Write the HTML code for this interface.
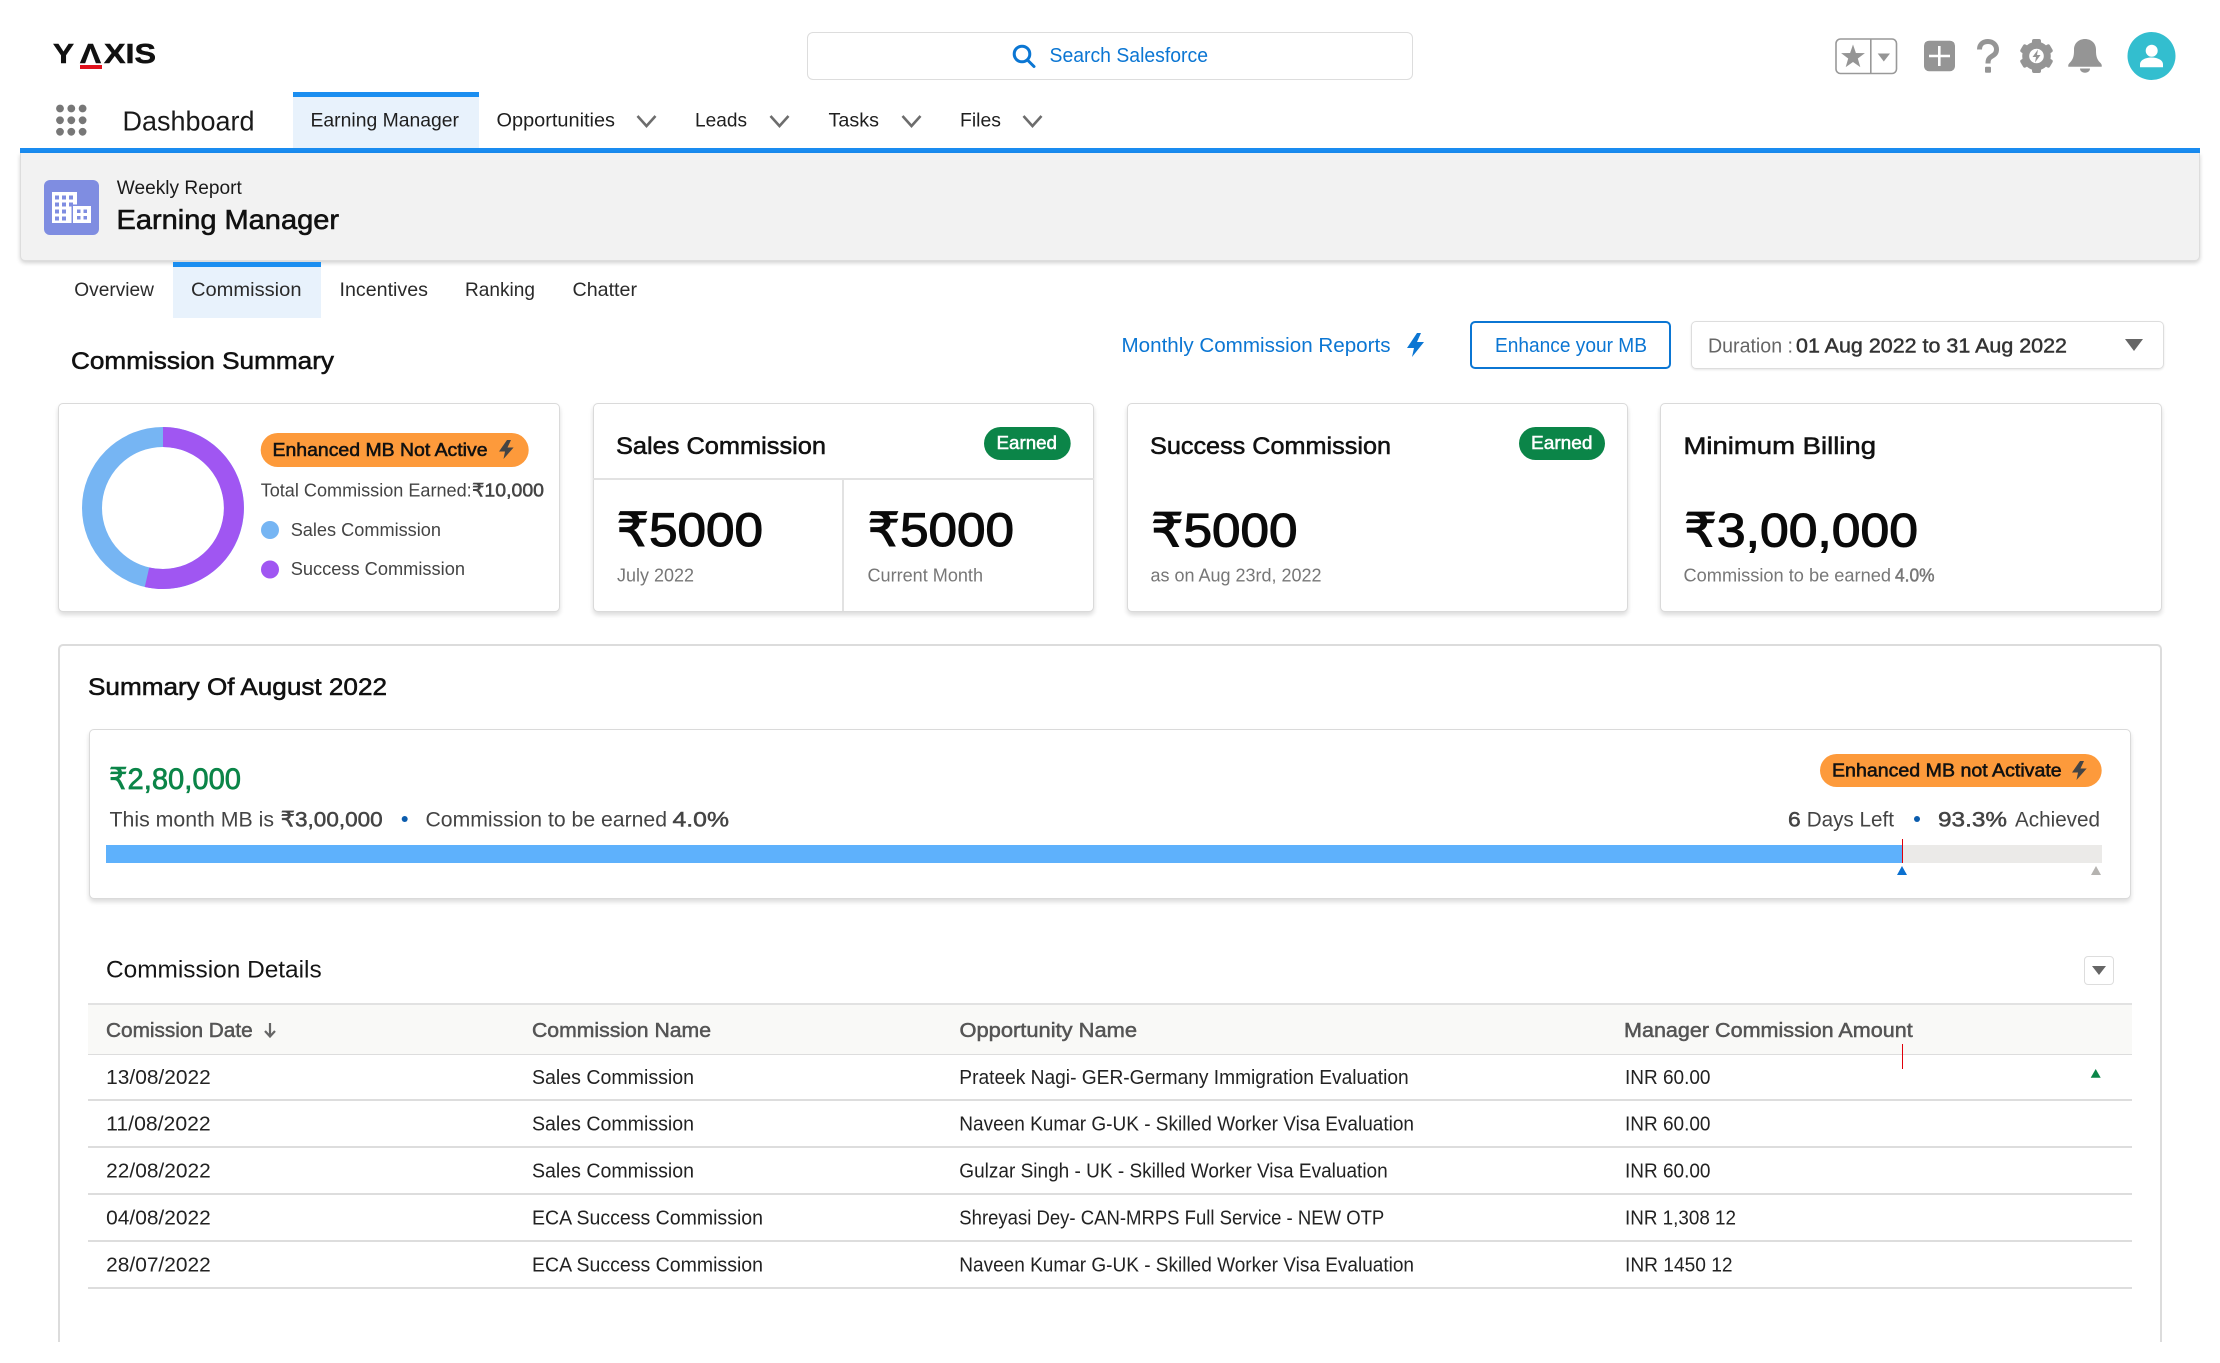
<!DOCTYPE html>
<html lang="en">
<head>
<meta charset="utf-8">
<title>Earning Manager</title>
<style>
html,body{margin:0;padding:0;background:#fff}
body{width:2220px;height:1363px;position:relative;overflow:hidden;font-family:"Liberation Sans","DejaVu Sans",sans-serif}
.b{position:absolute;box-sizing:border-box}
.card{background:#fff;border:1.5px solid #dadada;border-radius:5px;box-shadow:0 3px 5px rgba(0,0,0,.14)}
svg{position:absolute;left:0;top:0}
text{font-family:"Liberation Sans","DejaVu Sans",sans-serif;white-space:pre}
</style>
</head>
<body>
<!-- nav -->
<div class="b" style="left:293px;top:92px;width:186px;height:57px;background:#e8f2fc;border-top:5px solid #1b8ef0"></div>
<div class="b" style="left:20px;top:148px;width:2180px;height:5px;background:#1a8cf0"></div>
<div class="b" style="left:807px;top:32px;width:606px;height:48px;border:1.5px solid #ddd;border-radius:6px"></div>
<!-- page header -->
<div class="b" style="left:20px;top:153px;width:2180px;height:108px;background:#f2f2f2;border:1.5px solid #ddd;border-top:0;border-radius:0 0 5px 5px;box-shadow:0 2px 4px rgba(0,0,0,.18)"></div>
<div class="b" style="left:44px;top:180px;width:55px;height:55px;background:#7f8de1;border-radius:6px"></div>
<div class="b" style="left:173px;top:262px;width:148px;height:56px;background:#e8f2fc;border-top:5px solid #1b8ef0"></div>
<!-- controls -->
<div class="b" style="left:1470px;top:321px;width:201px;height:48px;border:2px solid #0b76d3;border-radius:5px"></div>
<div class="b" style="left:1691px;top:321px;width:473px;height:48px;border:1.5px solid #ddd;border-radius:5px;box-shadow:0 1px 2px rgba(0,0,0,.1)"></div>
<!-- cards -->
<div class="b card" style="left:58px;top:403px;width:502px;height:209px"></div>
<div class="b card" style="left:593px;top:403px;width:501px;height:209px"></div>
<div class="b" style="left:593px;top:478px;width:501px;height:2px;background:#e2e2e2"></div>
<div class="b" style="left:842px;top:479px;width:2px;height:132px;background:#e2e2e2"></div>
<div class="b card" style="left:1127px;top:403px;width:501px;height:209px"></div>
<div class="b card" style="left:1660px;top:403px;width:502px;height:209px"></div>
<!-- summary panel -->
<div class="b" style="left:58px;top:644px;width:2104px;height:698px;background:#fff;border:2px solid #dcdcdc;border-bottom:0;border-radius:5px 5px 0 0"></div>
<div class="b card" style="left:89px;top:729px;width:2042px;height:170px"></div>
<div class="b" style="left:106px;top:845px;width:1996px;height:18px;background:#ebeae8"></div>
<div class="b" style="left:106px;top:845px;width:1796px;height:18px;background:#5eb1fc"></div>
<div class="b" style="left:1901.5px;top:839px;width:1.6px;height:24px;background:#e0000a"></div>
<!-- table -->
<div class="b" style="left:2084px;top:956px;width:30px;height:29px;border:1.5px solid #ddd;border-radius:4px"></div>
<div class="b" style="left:88px;top:1003px;width:2044px;height:52px;background:#f9f9f7;border-top:2px solid #e2e2e2;border-bottom:1.5px solid #ddd"></div>
<div class="b" style="left:88px;top:1099px;width:2044px;height:1.5px;background:#ddd"></div>
<div class="b" style="left:88px;top:1146px;width:2044px;height:1.5px;background:#ddd"></div>
<div class="b" style="left:88px;top:1193px;width:2044px;height:1.5px;background:#ddd"></div>
<div class="b" style="left:88px;top:1240px;width:2044px;height:1.5px;background:#ddd"></div>
<div class="b" style="left:88px;top:1287px;width:2044px;height:1.5px;background:#ddd"></div>
<div class="b" style="left:1901.5px;top:1044px;width:1.6px;height:25px;background:#e0000a"></div>

<svg width="2220" height="1363" viewBox="0 0 2220 1363" xmlns="http://www.w3.org/2000/svg">
<!-- logo -->
<g fill="#111" stroke="#111" stroke-width=".5" font-weight="700" font-size="28">
<text x="53" y="63" textLength="21" lengthAdjust="spacingAndGlyphs">Y</text>
<text x="80" y="63" textLength="21" lengthAdjust="spacingAndGlyphs">Λ</text>
<text x="104" y="63" textLength="52" lengthAdjust="spacingAndGlyphs">XIS</text>
</g>
<rect x="80" y="65" width="22" height="4" fill="#e0101c"/>
<!-- app launcher -->
<g fill="#777">
<circle cx="60" cy="108.5" r="3.9"/><circle cx="71.3" cy="108.5" r="3.9"/><circle cx="82.6" cy="108.5" r="3.9"/>
<circle cx="60" cy="120.3" r="3.9"/><circle cx="71.3" cy="120.3" r="3.9"/><circle cx="82.6" cy="120.3" r="3.9"/>
<circle cx="60" cy="131.8" r="3.9"/><circle cx="71.3" cy="131.8" r="3.9"/><circle cx="82.6" cy="131.8" r="3.9"/>
</g>
<text x="122.5" y="130.5" font-size="28" fill="#1a1a1a" textLength="132" lengthAdjust="spacingAndGlyphs">Dashboard</text>
<!-- search -->
<circle cx="1022" cy="54" r="7.8" fill="none" stroke="#0b76d3" stroke-width="3"/>
<path d="M1027.5 60L1034 66.5" fill="none" stroke="#0b76d3" stroke-width="3" stroke-linecap="round"/>
<text x="1049.5" y="62" font-size="20" fill="#0b76d3" textLength="158.5" lengthAdjust="spacingAndGlyphs">Search Salesforce</text>
<!-- nav items -->
<g font-size="19.5" fill="#1f1f1f">
<text x="310.5" y="126.5" textLength="148.5" lengthAdjust="spacingAndGlyphs">Earning Manager</text>
<text x="496.5" y="126.5" textLength="118.5" lengthAdjust="spacingAndGlyphs">Opportunities</text>
<text x="695" y="126.5" textLength="52" lengthAdjust="spacingAndGlyphs">Leads</text>
<text x="828.5" y="126.5" textLength="50.5" lengthAdjust="spacingAndGlyphs">Tasks</text>
<text x="960" y="126.5" textLength="41" lengthAdjust="spacingAndGlyphs">Files</text>
</g>
<g fill="none" stroke="#6d6d6d" stroke-width="2.6">
<path d="M637.5 116L646.5 126L655.5 116"/>
<path d="M770.5 116L779.5 126L788.5 116"/>
<path d="M902.5 116L911.5 126L920.5 116"/>
<path d="M1023.5 116L1032.5 126L1041.5 116"/>
</g>
<!-- top right icons -->
<rect x="1836" y="39" width="60.5" height="34.5" rx="4.5" fill="#fff" stroke="#999" stroke-width="1.6"/>
<path d="M1870.8 39V73.5" stroke="#999" stroke-width="1.6"/>
<polygon fill="#959595" points="1853,44.5 1855.9,53 1864.9,53.1 1857.8,58.5 1860.3,67.1 1853,62 1845.7,67.1 1848.2,58.5 1841.1,53.1 1850.1,53"/>
<polygon fill="#959595" points="1877.7,53.5 1890,53.5 1883.8,61.5"/>
<rect x="1924" y="40.7" width="31" height="30.5" rx="5" fill="#959595"/>
<path d="M1929 56H1950M1939.3 46V66" stroke="#fff" stroke-width="2.6"/>
<path d="M1979.5 49.5C1979.5 44 1983.5 41.5 1988 41.5C1993 41.5 1996.5 45 1996.5 49.5C1996.5 53.5 1994 55 1991.5 56.5C1989 58 1988 59.5 1988 63.5" fill="none" stroke="#959595" stroke-width="5"/>
<rect x="1985" y="66.7" width="6" height="6" rx="1" fill="#959595"/>
<g transform="translate(2036.5 56)">
<circle r="10.8" fill="none" stroke="#959595" stroke-width="7"/>
<g fill="#959595">
<rect x="-4.5" y="-17" width="9" height="7" rx="2"/>
<rect x="-4.5" y="-17" width="9" height="7" rx="2" transform="rotate(60)"/>
<rect x="-4.5" y="-17" width="9" height="7" rx="2" transform="rotate(120)"/>
<rect x="-4.5" y="-17" width="9" height="7" rx="2" transform="rotate(180)"/>
<rect x="-4.5" y="-17" width="9" height="7" rx="2" transform="rotate(240)"/>
<rect x="-4.5" y="-17" width="9" height="7" rx="2" transform="rotate(300)"/>
<polygon points="1.5,-6.5 -4,1 -0.5,1 -1.5,6.5 4,-1 0.5,-1"/>
</g>
</g>
<path d="M2070 62.5C2073 59.5 2074 56 2074 51V49.5C2074 43.5 2078.5 39 2085 39S2096 43.5 2096 49.5V51C2096 56 2097 59.5 2100 62.5C2101.5 64 2102 65 2101.7 66.7H2068.3C2068 65 2068.5 64 2070 62.5Z" fill="#959595"/>
<path d="M2080 68.5H2090C2090 71 2088 72.7 2085 72.7S2080 71 2080 68.5Z" fill="#959595"/>
<circle cx="2151.5" cy="56" r="24" fill="#33becf"/>
<circle cx="2151.7" cy="50.7" r="6" fill="#fff"/>
<path d="M2140 67.3V64.5C2140 60 2145.5 57.5 2151.5 57.5S2163 60 2163 64.5V67.3Z" fill="#fff"/>
<!-- header icon -->
<rect x="52" y="192" width="25" height="31" fill="#fff"/>
<g fill="#7f8de1">
<rect x="55" y="195.5" width="4" height="4"/><rect x="62" y="195.5" width="4" height="4"/><rect x="69" y="195.5" width="4" height="4"/>
<rect x="55" y="202.5" width="4" height="4"/><rect x="62" y="202.5" width="4" height="4"/><rect x="69" y="202.5" width="4" height="4"/>
<rect x="55" y="209.5" width="4" height="4"/><rect x="62" y="209.5" width="4" height="4"/>
<rect x="55" y="216.5" width="4" height="4"/><rect x="62" y="216.5" width="4" height="4"/>
<rect x="71.5" y="204.5" width="21" height="20"/>
</g>
<rect x="73" y="206" width="18" height="17" fill="#fff"/>
<g fill="#7f8de1">
<rect x="77" y="209.5" width="3.5" height="3.5"/><rect x="83.5" y="209.5" width="3.5" height="3.5"/>
<rect x="77" y="216" width="3.5" height="3.5"/><rect x="83.5" y="216" width="3.5" height="3.5"/>
</g>
<text x="116.8" y="194" font-size="19.5" fill="#1a1a1a" textLength="125" lengthAdjust="spacingAndGlyphs">Weekly Report</text>
<text x="116.5" y="229" font-size="28" fill="#111" stroke="#111" stroke-width=".6" textLength="222.5" lengthAdjust="spacingAndGlyphs">Earning Manager</text>
<!-- subtabs -->
<g font-size="19.5" fill="#2a2a2a">
<text x="74.3" y="296" textLength="79.7" lengthAdjust="spacingAndGlyphs">Overview</text>
<text x="191" y="296" textLength="110.5" lengthAdjust="spacingAndGlyphs">Commission</text>
<text x="339.5" y="296" textLength="88.5" lengthAdjust="spacingAndGlyphs">Incentives</text>
<text x="465" y="296" textLength="70" lengthAdjust="spacingAndGlyphs">Ranking</text>
<text x="572.5" y="296" textLength="64.5" lengthAdjust="spacingAndGlyphs">Chatter</text>
</g>
<text x="71" y="369" font-size="24.5" fill="#111" stroke="#111" stroke-width=".55" textLength="263" lengthAdjust="spacingAndGlyphs">Commission Summary</text>
<text x="1121.5" y="352" font-size="20" fill="#0b76d3" textLength="269" lengthAdjust="spacingAndGlyphs">Monthly Commission Reports</text>
<polygon fill="#0b76d3" points="1417,333 1407,348 1414,348 1412,357 1424,342 1417,342 1421,333"/>
<text x="1495" y="352" font-size="20" fill="#0b76d3" textLength="152" lengthAdjust="spacingAndGlyphs">Enhance your MB</text>
<text x="1708" y="352.5" font-size="20" fill="#666" textLength="85" lengthAdjust="spacingAndGlyphs">Duration :</text>
<text x="1796" y="352.5" font-size="20" fill="#333" stroke="#333" stroke-width=".45" textLength="271" lengthAdjust="spacingAndGlyphs">01 Aug 2022 to 31 Aug 2022</text>
<polygon fill="#666" points="2125,339 2143,339 2134,351"/>
<!-- donut -->
<circle cx="163" cy="508" r="71" fill="none" stroke="#76b5f3" stroke-width="20"/>
<path d="M163 437A71 71 0 1 1 147 577.2" fill="none" stroke="#a056f2" stroke-width="20"/>
<rect x="260.7" y="433" width="268" height="34" rx="17" fill="#fd9a3b"/>
<text x="272.5" y="456" font-size="18.5" fill="#111" stroke="#111" stroke-width=".55" textLength="215" lengthAdjust="spacingAndGlyphs">Enhanced MB Not Active</text>
<polygon fill="#444" points="507,440 499,451.5 505,451.5 503.5,459 513.6,447.5 507.5,447.5 511,440"/>
<text x="260.7" y="496.7" font-size="18.5" fill="#444" textLength="211" lengthAdjust="spacingAndGlyphs">Total Commission Earned:</text>
<text x="472" y="496.7" font-size="18.5" fill="#444" stroke="#444" stroke-width=".5" textLength="72" lengthAdjust="spacingAndGlyphs">₹10,000</text>
<circle cx="270" cy="530" r="9" fill="#76b5f3"/>
<circle cx="270" cy="569.5" r="9" fill="#a056f2"/>
<text x="290.7" y="536" font-size="18.5" fill="#444" textLength="150.3" lengthAdjust="spacingAndGlyphs">Sales Commission</text>
<text x="290.7" y="575" font-size="18.5" fill="#444" textLength="174.3" lengthAdjust="spacingAndGlyphs">Success Commission</text>
<!-- sales card -->
<g font-size="24.5" fill="#111" stroke="#111" stroke-width=".55">
<text x="616" y="454" textLength="210" lengthAdjust="spacingAndGlyphs">Sales Commission</text>
<text x="1150" y="454" textLength="241" lengthAdjust="spacingAndGlyphs">Success Commission</text>
<text x="1683.5" y="454" textLength="192.5" lengthAdjust="spacingAndGlyphs">Minimum Billing</text>
</g>
<rect x="984" y="427" width="86.7" height="33" rx="16.5" fill="#0b8548"/>
<rect x="1519" y="427" width="86" height="33" rx="16.5" fill="#0b8548"/>
<g font-size="18" fill="#fff" stroke="#fff" stroke-width=".5">
<text x="996.5" y="449" textLength="60.5" lengthAdjust="spacingAndGlyphs">Earned</text>
<text x="1531" y="449" textLength="61.5" lengthAdjust="spacingAndGlyphs">Earned</text>
</g>
<g font-size="47" fill="#0a0a0a" stroke="#0a0a0a" stroke-width="1.1">
<text x="616.5" y="546" textLength="146.5" lengthAdjust="spacingAndGlyphs">₹5000</text>
<text x="867.5" y="546" textLength="146.5" lengthAdjust="spacingAndGlyphs">₹5000</text>
<text x="1151" y="546.5" textLength="146.5" lengthAdjust="spacingAndGlyphs">₹5000</text>
<text x="1684" y="546.5" textLength="234" lengthAdjust="spacingAndGlyphs">₹3,00,000</text>
</g>
<g font-size="18.5" fill="#777">
<text x="617" y="581.5" textLength="77" lengthAdjust="spacingAndGlyphs">July 2022</text>
<text x="867.5" y="581.5" textLength="115.5" lengthAdjust="spacingAndGlyphs">Current Month</text>
<text x="1150.5" y="581.5" textLength="171" lengthAdjust="spacingAndGlyphs">as on Aug 23rd, 2022</text>
<text x="1683.5" y="581.5" textLength="207.5" lengthAdjust="spacingAndGlyphs">Commission to be earned</text>
<text x="1895" y="581.5" stroke="#777" stroke-width=".5" textLength="39.5" lengthAdjust="spacingAndGlyphs">4.0%</text>
</g>
<!-- summary -->
<text x="88" y="695" font-size="24.5" fill="#111" stroke="#111" stroke-width=".55" textLength="299" lengthAdjust="spacingAndGlyphs">Summary Of August 2022</text>
<text x="109" y="789" font-size="30" fill="#0b8548" stroke="#0b8548" stroke-width=".7" textLength="132" lengthAdjust="spacingAndGlyphs">₹2,80,000</text>
<g font-size="21.5" fill="#444">
<text x="109.5" y="826.7" textLength="164.5" lengthAdjust="spacingAndGlyphs">This month MB is</text>
<text x="280.7" y="826.7" stroke="#444" stroke-width=".5" textLength="102" lengthAdjust="spacingAndGlyphs">₹3,00,000</text>
<text x="425.5" y="826.7" textLength="241.5" lengthAdjust="spacingAndGlyphs">Commission to be earned</text>
<text x="672.5" y="826.7" stroke="#444" stroke-width=".5" textLength="56.5" lengthAdjust="spacingAndGlyphs">4.0%</text>
<text x="1788" y="826.7" stroke="#444" stroke-width=".5" textLength="12.7" lengthAdjust="spacingAndGlyphs">6</text>
<text x="1806.7" y="826.7" textLength="87.3" lengthAdjust="spacingAndGlyphs">Days Left</text>
<text x="1938" y="826.7" stroke="#444" stroke-width=".5" textLength="69" lengthAdjust="spacingAndGlyphs">93.3%</text>
<text x="2015" y="826.7" textLength="85" lengthAdjust="spacingAndGlyphs">Achieved</text>
</g>
<circle cx="404.7" cy="819" r="3" fill="#0b5cad"/>
<circle cx="1917" cy="819" r="3" fill="#0b5cad"/>
<rect x="1820" y="754" width="281.7" height="33" rx="16.5" fill="#fd9a3b"/>
<text x="1832" y="776.7" font-size="18.5" fill="#111" stroke="#111" stroke-width=".55" textLength="229.7" lengthAdjust="spacingAndGlyphs">Enhanced MB not Activate</text>
<polygon fill="#444" points="2080,761 2072,772.5 2078,772.5 2076.5,780 2086.7,768.5 2080.5,768.5 2084,761"/>
<polygon fill="#0a70d0" points="1902,866 1907,875 1897,875"/>
<polygon fill="#b5b3b0" points="2096,866 2101,875 2091,875"/>
<!-- details -->
<text x="106" y="977.7" font-size="24" fill="#151515" textLength="215.7" lengthAdjust="spacingAndGlyphs">Commission Details</text>
<polygon fill="#666" points="2092,966 2106,966 2099,975"/>
<g font-size="20" fill="#555" stroke="#555" stroke-width=".5">
<text x="106" y="1037" textLength="146.7" lengthAdjust="spacingAndGlyphs">Comission Date</text>
<text x="532" y="1037" textLength="179" lengthAdjust="spacingAndGlyphs">Commission Name</text>
<text x="959.5" y="1037" textLength="177.5" lengthAdjust="spacingAndGlyphs">Opportunity Name</text>
<text x="1624" y="1037" textLength="288.7" lengthAdjust="spacingAndGlyphs">Manager Commission Amount</text>
</g>
<path d="M270 1023V1036M265 1031L270 1036.5L275 1031" fill="none" stroke="#666" stroke-width="2.2"/>
<g font-size="20" fill="#222">
<text x="106.2" y="1084" textLength="104.5" lengthAdjust="spacingAndGlyphs">13/08/2022</text>
<text x="106.2" y="1130.7" textLength="104.5" lengthAdjust="spacingAndGlyphs">11/08/2022</text>
<text x="106.2" y="1177.7" textLength="104.5" lengthAdjust="spacingAndGlyphs">22/08/2022</text>
<text x="106.2" y="1224.5" textLength="104.5" lengthAdjust="spacingAndGlyphs">04/08/2022</text>
<text x="106.2" y="1271.7" textLength="104.5" lengthAdjust="spacingAndGlyphs">28/07/2022</text>
<text x="532" y="1084" textLength="162" lengthAdjust="spacingAndGlyphs">Sales Commission</text>
<text x="532" y="1130.7" textLength="162" lengthAdjust="spacingAndGlyphs">Sales Commission</text>
<text x="532" y="1177.7" textLength="162" lengthAdjust="spacingAndGlyphs">Sales Commission</text>
<text x="532" y="1224.5" textLength="231" lengthAdjust="spacingAndGlyphs">ECA Success Commission</text>
<text x="532" y="1271.7" textLength="231" lengthAdjust="spacingAndGlyphs">ECA Success Commission</text>
<text x="959.3" y="1084" textLength="449.4" lengthAdjust="spacingAndGlyphs">Prateek Nagi- GER-Germany Immigration Evaluation</text>
<text x="959.3" y="1130.7" textLength="454.7" lengthAdjust="spacingAndGlyphs">Naveen Kumar G-UK - Skilled Worker Visa Evaluation</text>
<text x="959.3" y="1177.7" textLength="428.4" lengthAdjust="spacingAndGlyphs">Gulzar Singh - UK - Skilled Worker Visa Evaluation</text>
<text x="959.3" y="1224.5" textLength="425" lengthAdjust="spacingAndGlyphs">Shreyasi Dey- CAN-MRPS Full Service - NEW OTP</text>
<text x="959.3" y="1271.7" textLength="454.7" lengthAdjust="spacingAndGlyphs">Naveen Kumar G-UK - Skilled Worker Visa Evaluation</text>
<text x="1625" y="1084" textLength="85.5" lengthAdjust="spacingAndGlyphs">INR 60.00</text>
<text x="1625" y="1130.7" textLength="85.5" lengthAdjust="spacingAndGlyphs">INR 60.00</text>
<text x="1625" y="1177.7" textLength="85.5" lengthAdjust="spacingAndGlyphs">INR 60.00</text>
<text x="1625" y="1224.5" textLength="111" lengthAdjust="spacingAndGlyphs">INR 1,308 12</text>
<text x="1625" y="1271.7" textLength="107.5" lengthAdjust="spacingAndGlyphs">INR 1450 12</text>
</g>
<polygon fill="#0b8548" points="2095.7,1069 2100.7,1077.7 2090.7,1077.7"/>
</svg>
</body>
</html>
